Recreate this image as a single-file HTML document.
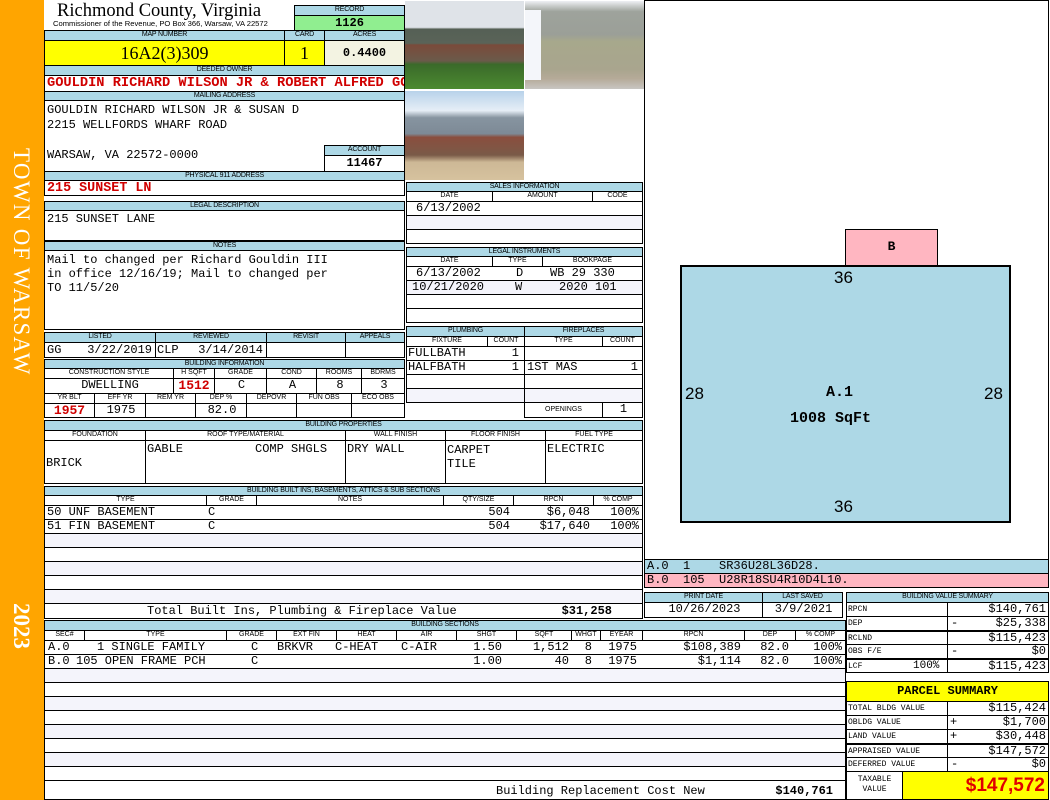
<!DOCTYPE html>
<html><head><meta charset="utf-8"><style>
*{margin:0;padding:0}
body{width:1050px;height:800px;position:relative;background:#fff;overflow:hidden;font-family:"Liberation Mono",monospace}
.b{position:absolute;box-sizing:border-box;border:1px solid #000;overflow:hidden;white-space:nowrap}
.L{background:#add8e6;font:7px/8px "Liberation Sans",sans-serif;text-align:center;letter-spacing:-.2px}
.H{background:#fff;font:7px/8px "Liberation Sans",sans-serif;text-align:center}
.m{font-size:12px;line-height:13px;padding-left:2px}
.c{text-align:center}
.red{color:#d00000;font-weight:bold}
.t{position:absolute;white-space:nowrap}
.alt{background:#f4f4fb}
.s{position:absolute;top:0;white-space:pre;font-size:12px;line-height:13px}
</style></head><body>
<div style="position:absolute;left:0;top:0;width:44px;height:800px;background:#ffa500"></div>
<div class="t" style="left:34px;top:148px;transform-origin:0 0;transform:rotate(90deg);color:#fff;font:23px 'Liberation Serif',serif;letter-spacing:1.3px">TOWN OF WARSAW</div>
<div class="t" style="left:34px;top:603px;transform-origin:0 0;transform:rotate(90deg);color:#fff;font:bold 23px 'Liberation Serif',serif">2023</div>

<div class="t" style="left:57px;top:1px;font:18.5px 'Liberation Serif',serif">Richmond County, Virginia</div>
<div class="t" style="left:53px;top:19px;font:7.6px 'Liberation Sans',sans-serif">Commissioner of the Revenue, PO Box 366, Warsaw, VA 22572</div>
<div class="b L" style="left:294px;top:5px;width:111px;height:11px">RECORD</div>
<div class="b c" style="left:294px;top:15px;width:111px;height:16px;background:#90ee90;font:bold 12px/14px 'Liberation Mono',monospace">1126</div>
<div class="b L" style="left:44px;top:30px;width:241px;height:11px">MAP NUMBER</div>
<div class="b L" style="left:284px;top:30px;width:41px;height:11px">CARD</div>
<div class="b L" style="left:324px;top:30px;width:81px;height:11px">ACRES</div>
<div class="b c" style="left:44px;top:40px;width:241px;height:26px;background:#ffff00;font:18px/24px 'Liberation Serif',serif">16A2(3)309</div>
<div class="b c" style="left:284px;top:40px;width:41px;height:26px;background:#ffff00;font:18px/24px 'Liberation Serif',serif">1</div>
<div class="b c" style="left:324px;top:40px;width:81px;height:26px;background:#f3f3e2;font:bold 12px/24px 'Liberation Mono',monospace">0.4400</div>
<div class="b L" style="left:44px;top:65px;width:361px;height:11px">DEEDED OWNER</div>
<div class="b red" style="left:44px;top:75px;width:361px;height:17px;font-size:13.7px;line-height:16px;padding-left:2px">GOULDIN RICHARD WILSON JR &amp; ROBERT ALFRED GOULDIN</div>
<div class="b L" style="left:44px;top:91px;width:361px;height:10px">MAILING ADDRESS</div>
<div class="b m" style="left:44px;top:100px;width:361px;height:72px;line-height:15px;padding-top:2px;white-space:pre">GOULDIN RICHARD WILSON JR &amp; SUSAN D
2215 WELLFORDS WHARF ROAD

WARSAW, VA 22572-0000</div>
<div class="b L" style="left:324px;top:145px;width:81px;height:11px">ACCOUNT</div>
<div class="b c" style="left:324px;top:155px;width:81px;height:17px;font:bold 12px/15px 'Liberation Mono',monospace">11467</div>
<div class="b L" style="left:44px;top:171px;width:361px;height:10px">PHYSICAL 911 ADDRESS</div>
<div class="b red" style="left:44px;top:180px;width:361px;height:16px;font-size:13.4px;line-height:15px;padding-left:2px">215 SUNSET LN</div>

<!-- photos -->
<div style="position:absolute;left:405px;top:1px;width:119px;height:88px;background:linear-gradient(#dfe3e8 0,#dfe3e8 30%,#556055 32%,#5a6358 48%,#7a4a3a 50%,#6b5a4a 68%,#3a6a2a 72%,#4c8a30 100%)"></div>
<div style="position:absolute;left:525px;top:1px;width:119px;height:88px;background:linear-gradient(#eef0f4 0,#9ea39c 12%,#9b9f98 38%,#a7a88c 46%,#a9a58e 78%,#b5aa98 88%,#c8c6c2 100%)"></div>
<div style="position:absolute;left:525px;top:10px;width:16px;height:70px;background:#f4f6fa"></div>
<div style="position:absolute;left:405px;top:91px;width:119px;height:89px;background:linear-gradient(#b8d2ea 0,#e6eef6 22%,#8794a0 30%,#7d8a96 48%,#8a4e3e 52%,#7a5a48 72%,#cdb896 80%,#d6c29e 100%)"></div>

<!-- sales -->
<div class="b L" style="left:406px;top:182px;width:237px;height:10px">SALES INFORMATION</div>
<div class="b H" style="left:406px;top:191px;width:87px;height:11px">DATE</div>
<div class="b H" style="left:492px;top:191px;width:101px;height:11px">AMOUNT</div>
<div class="b H" style="left:592px;top:191px;width:51px;height:11px">CODE</div>
<div class="b" style="left:406px;top:201px;width:237px;height:15px"><span class="s" style="left:9px">6/13/2002</span></div>
<div class="b alt" style="left:406px;top:215px;width:237px;height:15px"></div>
<div class="b" style="left:406px;top:229px;width:237px;height:15px"></div>
<div class="b L" style="left:406px;top:247px;width:237px;height:10px">LEGAL INSTRUMENTS</div>
<div class="b H" style="left:406px;top:256px;width:87px;height:11px">DATE</div>
<div class="b H" style="left:492px;top:256px;width:51px;height:11px">TYPE</div>
<div class="b H" style="left:542px;top:256px;width:101px;height:11px">BOOKPAGE</div>
<div class="b" style="left:406px;top:266px;width:237px;height:15px"><span class="s" style="left:9px">6/13/2002</span><span class="s" style="left:109px">D</span><span class="s" style="left:143px">WB 29 330</span></div>
<div class="b alt" style="left:406px;top:280px;width:237px;height:15px"><span class="s" style="left:5px">10/21/2020</span><span class="s" style="left:108px">W</span><span class="s" style="left:152px">2020 101</span></div>
<div class="b" style="left:406px;top:294px;width:237px;height:15px"></div>
<div class="b" style="left:406px;top:308px;width:237px;height:15px"></div>

<!-- legal/notes -->
<div class="b L" style="left:44px;top:201px;width:361px;height:10px">LEGAL DESCRIPTION</div>
<div class="b m" style="left:44px;top:210px;width:361px;height:31px;padding-top:2px">215 SUNSET LANE</div>
<div class="b L" style="left:44px;top:241px;width:361px;height:10px">NOTES</div>
<div class="b m" style="left:44px;top:250px;width:361px;height:80px;line-height:14px;padding-top:2px;white-space:pre">Mail to changed per Richard Gouldin III
in office 12/16/19; Mail to changed per
TO 11/5/20</div>

<!-- listed -->
<div class="b L" style="left:44px;top:332px;width:112px;height:11px">LISTED</div>
<div class="b L" style="left:155px;top:332px;width:112px;height:11px">REVIEWED</div>
<div class="b L" style="left:266px;top:332px;width:80px;height:11px">REVISIT</div>
<div class="b L" style="left:345px;top:332px;width:60px;height:11px">APPEALS</div>
<div class="b" style="left:44px;top:342px;width:112px;height:16px"><span class="s" style="left:2px;top:1px">GG</span><span class="s" style="right:3px;top:1px">3/22/2019</span></div>
<div class="b" style="left:155px;top:342px;width:112px;height:16px"><span class="s" style="left:1px;top:1px">CLP</span><span class="s" style="right:3px;top:1px">3/14/2014</span></div>
<div class="b" style="left:266px;top:342px;width:80px;height:16px"></div>
<div class="b" style="left:345px;top:342px;width:60px;height:16px"></div>

<!-- building info -->
<div class="b L" style="left:44px;top:359px;width:361px;height:10px">BUILDING INFORMATION</div>
<div class="b H" style="left:44px;top:368px;width:130px;height:11px">CONSTRUCTION STYLE</div>
<div class="b H" style="left:173px;top:368px;width:42px;height:11px">H SQFT</div>
<div class="b H" style="left:214px;top:368px;width:53px;height:11px">GRADE</div>
<div class="b H" style="left:266px;top:368px;width:51px;height:11px">COND</div>
<div class="b H" style="left:316px;top:368px;width:46px;height:11px">ROOMS</div>
<div class="b H" style="left:361px;top:368px;width:44px;height:11px">BDRMS</div>
<div class="b m c" style="left:44px;top:378px;width:130px;height:16px">DWELLING</div>
<div class="b c red" style="left:173px;top:378px;width:42px;height:16px;font-size:13px;line-height:14px">1512</div>
<div class="b m c" style="left:214px;top:378px;width:53px;height:16px">C</div>
<div class="b m c" style="left:266px;top:378px;width:51px;height:16px">A</div>
<div class="b m c" style="left:316px;top:378px;width:46px;height:16px">8</div>
<div class="b m c" style="left:361px;top:378px;width:44px;height:16px">3</div>
<div class="b H" style="left:44px;top:393px;width:51px;height:11px">YR BLT</div>
<div class="b H" style="left:94px;top:393px;width:52px;height:11px">EFF YR</div>
<div class="b H" style="left:145px;top:393px;width:51px;height:11px">REM YR</div>
<div class="b H" style="left:195px;top:393px;width:52px;height:11px">DEP %</div>
<div class="b H" style="left:246px;top:393px;width:51px;height:11px">DEPOVR</div>
<div class="b H" style="left:296px;top:393px;width:56px;height:11px">FUN OBS</div>
<div class="b H" style="left:351px;top:393px;width:54px;height:11px">ECO OBS</div>
<div class="b c red" style="left:44px;top:403px;width:51px;height:15px;font-size:13px;line-height:14px">1957</div>
<div class="b m c" style="left:94px;top:403px;width:52px;height:15px">1975</div>
<div class="b" style="left:145px;top:403px;width:51px;height:15px"></div>
<div class="b m c" style="left:195px;top:403px;width:52px;height:15px">82.0</div>
<div class="b" style="left:246px;top:403px;width:51px;height:15px"></div>
<div class="b" style="left:296px;top:403px;width:56px;height:15px"></div>
<div class="b" style="left:351px;top:403px;width:54px;height:15px"></div>

<!-- plumbing -->
<div class="b L" style="left:406px;top:326px;width:119px;height:11px">PLUMBING</div>
<div class="b L" style="left:524px;top:326px;width:119px;height:11px">FIREPLACES</div>
<div class="b H" style="left:406px;top:336px;width:82px;height:11px">FIXTURE</div>
<div class="b H" style="left:487px;top:336px;width:38px;height:11px">COUNT</div>
<div class="b H" style="left:524px;top:336px;width:79px;height:11px">TYPE</div>
<div class="b H" style="left:602px;top:336px;width:41px;height:11px">COUNT</div>
<div class="b" style="left:406px;top:346px;width:119px;height:15px"><span class="s" style="left:1px">FULLBATH</span><span class="s" style="right:5px">1</span></div>
<div class="b" style="left:406px;top:360px;width:119px;height:15px"><span class="s" style="left:1px">HALFBATH</span><span class="s" style="right:5px">1</span></div>
<div class="b" style="left:406px;top:374px;width:119px;height:15px"></div>
<div class="b alt" style="left:406px;top:388px;width:119px;height:15px"></div>
<div class="b" style="left:524px;top:346px;width:119px;height:15px"></div>
<div class="b" style="left:524px;top:360px;width:119px;height:15px"><span class="s" style="left:2px">1ST MAS</span><span class="s" style="right:4px">1</span></div>
<div class="b" style="left:524px;top:374px;width:119px;height:15px"></div>
<div class="b alt" style="left:524px;top:388px;width:119px;height:15px"></div>
<div class="b H" style="left:524px;top:402px;width:79px;height:16px;line-height:14px">OPENINGS</div>
<div class="b m c" style="left:602px;top:402px;width:41px;height:16px">1</div>

<!-- building properties -->
<div class="b L" style="left:44px;top:420px;width:599px;height:11px">BUILDING PROPERTIES</div>
<div class="b H" style="left:44px;top:430px;width:102px;height:11px">FOUNDATION</div>
<div class="b H" style="left:145px;top:430px;width:201px;height:11px">ROOF TYPE/MATERIAL</div>
<div class="b H" style="left:345px;top:430px;width:101px;height:11px">WALL FINISH</div>
<div class="b H" style="left:445px;top:430px;width:101px;height:11px">FLOOR FINISH</div>
<div class="b H" style="left:545px;top:430px;width:98px;height:11px">FUEL TYPE</div>
<div class="b m" style="left:44px;top:440px;width:102px;height:44px;padding:16px 0 0 1px">BRICK</div>
<div class="b m" style="left:145px;top:440px;width:201px;height:44px;padding:2px 0 0 1px;white-space:pre">GABLE          COMP SHGLS</div>
<div class="b m" style="left:345px;top:440px;width:101px;height:44px;padding:2px 0 0 1px">DRY WALL</div>
<div class="b m" style="left:445px;top:440px;width:101px;height:44px;padding:2px 0 0 1px;line-height:14px">CARPET<br>TILE</div>
<div class="b m" style="left:545px;top:440px;width:98px;height:44px;padding:2px 0 0 1px">ELECTRIC</div>

<!-- built ins -->
<div class="b L" style="left:44px;top:486px;width:599px;height:10px">BUILDING BUILT INS, BASEMENTS, ATTICS &amp; SUB SECTIONS</div>
<div class="b H" style="left:44px;top:495px;width:163px;height:11px">TYPE</div>
<div class="b H" style="left:206px;top:495px;width:51px;height:11px">GRADE</div>
<div class="b H" style="left:256px;top:495px;width:188px;height:11px">NOTES</div>
<div class="b H" style="left:443px;top:495px;width:71px;height:11px">QTY/SIZE</div>
<div class="b H" style="left:513px;top:495px;width:81px;height:11px">RPCN</div>
<div class="b H" style="left:593px;top:495px;width:50px;height:11px">% COMP</div>
<div class="b" style="left:44px;top:505px;width:599px;height:15px"><span class="s" style="left:2px">50 UNF BASEMENT</span><span class="s" style="left:163px">C</span><span class="s" style="right:132px">504</span><span class="s" style="right:52px">$6,048</span><span class="s" style="right:3px">100%</span></div>
<div class="b" style="left:44px;top:519px;width:599px;height:15px"><span class="s" style="left:2px">51 FIN BASEMENT</span><span class="s" style="left:163px">C</span><span class="s" style="right:132px">504</span><span class="s" style="right:52px">$17,640</span><span class="s" style="right:3px">100%</span></div>
<div class="b alt" style="left:44px;top:533px;width:599px;height:15px"></div>
<div class="b" style="left:44px;top:547px;width:599px;height:15px"></div>
<div class="b alt" style="left:44px;top:561px;width:599px;height:15px"></div>
<div class="b" style="left:44px;top:575px;width:599px;height:15px"></div>
<div class="b alt" style="left:44px;top:589px;width:599px;height:15px"></div>
<div class="b" style="left:44px;top:603px;width:599px;height:16px"><span class="s" style="left:102px;line-height:15px">Total Built Ins, Plumbing &amp; Fireplace Value</span><span class="s" style="right:30px;line-height:15px;font-weight:bold">$31,258</span></div>

<!-- sketch -->
<div class="b" style="left:644px;top:0;width:405px;height:560px"></div>
<div class="b" style="left:845px;top:229px;width:93px;height:38px;background:#ffb6c1"><div style="text-align:center;font:bold 13px/34px 'Liberation Mono',monospace">B</div></div>
<div class="b" style="left:680px;top:265px;width:331px;height:258px;background:#add8e6;border-width:2px"></div>
<div class="t" style="left:834px;top:268px;font:17px 'Liberation Sans',sans-serif">36</div>
<div class="t" style="left:834px;top:497px;font:17px 'Liberation Sans',sans-serif">36</div>
<div class="t" style="left:685px;top:384px;font:17px 'Liberation Sans',sans-serif">28</div>
<div class="t" style="left:984px;top:384px;font:17px 'Liberation Sans',sans-serif">28</div>
<div class="t" style="left:826px;top:384px;font:bold 15px 'Liberation Mono',monospace">A.1</div>
<div class="t" style="left:790px;top:410px;font:bold 15px 'Liberation Mono',monospace">1008 SqFt</div>
<div class="b m" style="left:644px;top:559px;width:405px;height:15px;background:#add8e6;white-space:pre">A.0  1    SR36U28L36D28.</div>
<div class="b m" style="left:644px;top:573px;width:405px;height:15px;background:#ffb6c1;white-space:pre">B.0  105  U28R18SU4R10D4L10.</div>

<!-- print date -->
<div class="b L" style="left:644px;top:592px;width:119px;height:11px">PRINT DATE</div>
<div class="b L" style="left:762px;top:592px;width:81px;height:11px">LAST SAVED</div>
<div class="b m c" style="left:644px;top:602px;width:119px;height:16px">10/26/2023</div>
<div class="b m c" style="left:762px;top:602px;width:81px;height:16px">3/9/2021</div>

<!-- building sections -->
<div class="b L" style="left:44px;top:620px;width:802px;height:11px">BUILDING SECTIONS</div>
<div class="b H" style="left:44px;top:630px;width:41px;height:11px">SEC#</div>
<div class="b H" style="left:84px;top:630px;width:143px;height:11px">TYPE</div>
<div class="b H" style="left:226px;top:630px;width:51px;height:11px">GRADE</div>
<div class="b H" style="left:276px;top:630px;width:61px;height:11px">EXT FIN</div>
<div class="b H" style="left:336px;top:630px;width:61px;height:11px">HEAT</div>
<div class="b H" style="left:396px;top:630px;width:61px;height:11px">AIR</div>
<div class="b H" style="left:456px;top:630px;width:61px;height:11px">SHGT</div>
<div class="b H" style="left:516px;top:630px;width:56px;height:11px">SQFT</div>
<div class="b H" style="left:571px;top:630px;width:30px;height:11px">WHGT</div>
<div class="b H" style="left:600px;top:630px;width:43px;height:11px">EYEAR</div>
<div class="b H" style="left:642px;top:630px;width:103px;height:11px">RPCN</div>
<div class="b H" style="left:744px;top:630px;width:52px;height:11px">DEP</div>
<div class="b H" style="left:795px;top:630px;width:51px;height:11px">% COMP</div>
<div class="b" style="left:44px;top:640px;width:802px;height:15px"><span class="s" style="left:3px">A.0</span><span class="s" style="left:52px">1 SINGLE FAMILY</span><span class="s" style="left:206px">C</span><span class="s" style="left:232px">BRKVR</span><span class="s" style="left:290px">C-HEAT</span><span class="s" style="left:356px">C-AIR</span><span class="s" style="right:343px">1.50</span><span class="s" style="right:276px">1,512</span><span class="s" style="right:253px">8</span><span class="s" style="right:208px">1975</span><span class="s" style="right:104px">$108,389</span><span class="s" style="right:56px">82.0</span><span class="s" style="right:3px">100%</span></div>
<div class="b" style="left:44px;top:654px;width:802px;height:15px"><span class="s" style="left:3px">B.0</span><span class="s" style="left:31px">105 OPEN FRAME PCH</span><span class="s" style="left:206px">C</span><span class="s" style="right:343px">1.00</span><span class="s" style="right:276px">40</span><span class="s" style="right:253px">8</span><span class="s" style="right:208px">1975</span><span class="s" style="right:104px">$1,114</span><span class="s" style="right:56px">82.0</span><span class="s" style="right:3px">100%</span></div>
<div class="b alt" style="left:44px;top:668px;width:802px;height:15px"></div>
<div class="b" style="left:44px;top:682px;width:802px;height:15px"></div>
<div class="b alt" style="left:44px;top:696px;width:802px;height:15px"></div>
<div class="b" style="left:44px;top:710px;width:802px;height:15px"></div>
<div class="b alt" style="left:44px;top:724px;width:802px;height:15px"></div>
<div class="b" style="left:44px;top:738px;width:802px;height:15px"></div>
<div class="b alt" style="left:44px;top:752px;width:802px;height:15px"></div>
<div class="b" style="left:44px;top:766px;width:802px;height:15px"></div>
<div class="b" style="left:44px;top:780px;width:802px;height:20px"><span class="s" style="left:451px;line-height:20px">Building Replacement Cost New</span><span class="s" style="right:12px;line-height:20px;font-weight:bold">$140,761</span></div>

<!-- value summary -->
<div class="b L" style="left:846px;top:592px;width:203px;height:11px">BUILDING VALUE SUMMARY</div>
<div style="position:absolute;left:846px;top:602px;width:203px;font:12px/13px 'Liberation Mono',monospace">
<div class="b" style="position:relative;height:15px;margin-bottom:-1px"><span style="position:absolute;left:1px;font-size:8px">RPCN</span><span style="position:absolute;left:100px;top:-1px;bottom:-1px;border-left:1px solid #000"></span><span style="position:absolute;right:2px">$140,761</span></div>
<div class="b" style="position:relative;height:15px;margin-bottom:-1px"><span style="position:absolute;left:1px;font-size:8px">DEP</span><span style="position:absolute;left:100px;top:-1px;bottom:-1px;border-left:1px solid #000"></span><span style="position:absolute;left:104px">-</span><span style="position:absolute;right:2px">$25,338</span></div>
<div class="b" style="position:relative;height:15px;margin-bottom:-1px;border-top-width:2px"><span style="position:absolute;left:1px;font-size:8px">RCLND</span><span style="position:absolute;left:100px;top:-1px;bottom:-1px;border-left:1px solid #000"></span><span style="position:absolute;right:2px">$115,423</span></div>
<div class="b" style="position:relative;height:15px;margin-bottom:-1px"><span style="position:absolute;left:1px;font-size:8px">OBS F/E</span><span style="position:absolute;left:100px;top:-1px;bottom:-1px;border-left:1px solid #000"></span><span style="position:absolute;left:104px">-</span><span style="position:absolute;right:2px">$0</span></div>
<div class="b" style="position:relative;height:15px;border-top-width:2px"><span style="position:absolute;left:1px;font-size:8px">LCF</span><span style="position:absolute;left:66px;font-size:11px">100%</span><span style="position:absolute;left:100px;top:-1px;bottom:-1px;border-left:1px solid #000"></span><span style="position:absolute;right:2px">$115,423</span></div>
</div>
<div class="b" style="left:846px;top:681px;width:203px;height:21px;background:#ffff00;text-align:center;font:bold 12px/19px 'Liberation Mono',monospace">PARCEL SUMMARY</div>
<div style="position:absolute;left:846px;top:701px;width:203px;font:12px/13px 'Liberation Mono',monospace">
<div class="b" style="position:relative;height:15px;margin-bottom:-1px"><span style="position:absolute;left:1px;font-size:8px">TOTAL BLDG VALUE</span><span style="position:absolute;left:100px;top:-1px;bottom:-1px;border-left:1px solid #000"></span><span style="position:absolute;right:2px">$115,424</span></div>
<div class="b" style="position:relative;height:15px;margin-bottom:-1px"><span style="position:absolute;left:1px;font-size:8px">OBLDG VALUE</span><span style="position:absolute;left:100px;top:-1px;bottom:-1px;border-left:1px solid #000"></span><span style="position:absolute;left:103px">+</span><span style="position:absolute;right:2px">$1,700</span></div>
<div class="b" style="position:relative;height:15px;margin-bottom:-1px"><span style="position:absolute;left:1px;font-size:8px">LAND VALUE</span><span style="position:absolute;left:100px;top:-1px;bottom:-1px;border-left:1px solid #000"></span><span style="position:absolute;left:103px">+</span><span style="position:absolute;right:2px">$30,448</span></div>
<div class="b" style="position:relative;height:15px;margin-bottom:-1px;border-top-width:2px"><span style="position:absolute;left:1px;font-size:8px">APPRAISED VALUE</span><span style="position:absolute;left:100px;top:-1px;bottom:-1px;border-left:1px solid #000"></span><span style="position:absolute;right:2px">$147,572</span></div>
<div class="b" style="position:relative;height:15px"><span style="position:absolute;left:1px;font-size:8px">DEFERRED VALUE</span><span style="position:absolute;left:100px;top:-1px;bottom:-1px;border-left:1px solid #000"></span><span style="position:absolute;left:104px">-</span><span style="position:absolute;right:2px">$0</span></div>
</div>
<div class="b" style="left:846px;top:771px;width:57px;height:29px;text-align:center;font:8px/10px 'Liberation Mono',monospace;padding-top:3px">TAXABLE<br>VALUE</div>
<div class="b" style="left:902px;top:771px;width:147px;height:29px;background:#ffff00;text-align:right;padding-right:3px;color:#e00000;font:bold 19px/28px 'Liberation Sans',sans-serif">$147,572</div>
</body></html>
